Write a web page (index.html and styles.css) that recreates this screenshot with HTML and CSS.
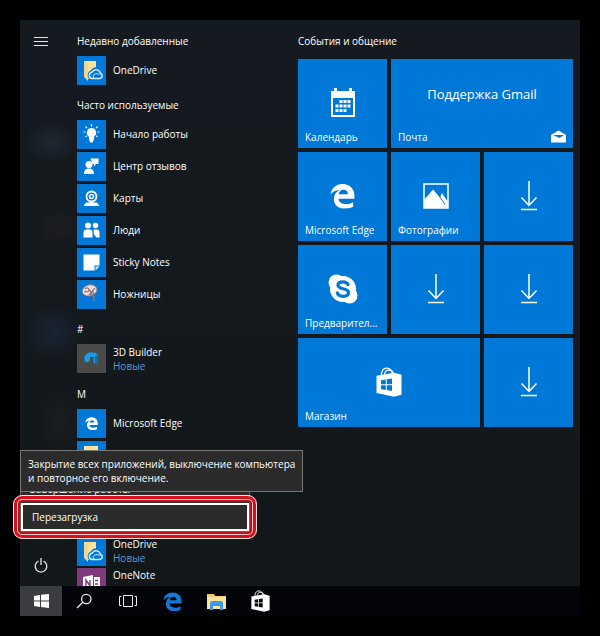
FILE: index.html
```
<!DOCTYPE html>
<html lang="ru">
<head>
<meta charset="utf-8">
<title>Пуск</title>
<link rel="stylesheet" href="styles.css">
</head>
<body>
<svg class="defs" aria-hidden="true">
  <symbol id="edge" viewBox="0 0 24 24"><path d="M0.500 10.600C1.400 4.500 5.500 0.500 12 0.500c7.500 0 11.500 5.200 11.500 11.500v2.600H8.200c0.200 3.600 3.600 5.200 7.200 5.200 2.600 0 4.800-0.700 6.800-1.900v4.500c-2.200 1.200-4.800 1.800-7.700 1.800C8 24.200 3.700 20.500 3.700 15c0-3.900 2-6.900 5.300-8.700C5.500 6.500 2.400 8 0.500 10.600zM8.300 10.300h8.900c0-2.600-1.300-4.400-4.100-4.400-2.700 0-4.400 2-4.800 4.400z"/></symbol>
  <symbol id="onedrive" viewBox="0 0 29 29"><path fill="#ffe29b" d="M7 5h12v18H10l-3-3z"/><path fill="#f3d590" d="M7 5l4 3v17l-4-4z"/><path fill="#0078d7" stroke="#0078d7" stroke-width="4" d="M14.500 22h9a2.500 2.500 0 0 0 .3-5 4.500 4.500 0 0 0-8.500-1 3.200 3.200 0 0 0-.8 6z"/><path fill="#0078d7" stroke="#d5ecff" stroke-width="1.500" d="M14.500 22.500h8.500a2.600 2.600 0 0 0 .5-5 4.500 4.500 0 0 0-8.300-1.500 3.400 3.400 0 0 0-.7 6.500z"/><path fill="none" stroke="#d5ecff" d="M16.500 22a3 3 0 0 1 2-4.200 4 4 0 0 1 4 .7"/></symbol>
  <symbol id="download" viewBox="0 0 18 30"><path fill="none" stroke="#fff" stroke-width="1.500" d="M9 0v24M1.500 16.500L9 24.500l7.500-8M1 28.500h16"/></symbol>
  <symbol id="store" viewBox="0 0 26 30"><path fill="none" stroke="#fff" stroke-width="1.300" d="M5.500 9C5 4 7.500 1 11 1.200c3 .2 5 2.500 5.500 5.500M8.500 8c0-3 2-5 5-4.800 2 .1 3.500 1.500 4 3.500"/><path fill="#fff" d="M0.500 8.800L18 5.800l7.500 2v20L18 29.700 0.500 26z"/><path fill="currentColor" d="M5 13.200l4.800-.7v4.700H5zM10.800 12.300l5.200-.8v5.700h-5.200zM5 18.200h4.800v4.700L5 22.200zM10.800 18.200H16V24l-5.200-.9z"/></symbol>
</svg>
<main class="desktop">
  <section class="start">
    <nav class="rail" aria-label="Пуск">
      <button class="rail-button" aria-label="Меню"><svg width="14" height="10" viewBox="0 0 14 10"><path stroke="#e6e6e6" d="M0 1.500h14M0 5.500h14M0 9.500h14"/></svg></button>
      <button class="rail-button" aria-label="Выключение"><svg width="14" height="16" viewBox="0 0 14 16"><path fill="none" stroke="#e6e6e6" stroke-width="1.300" d="M4.500 4a5.800 5.800 0 1 0 5 0M7 1v7"/></svg></button>
    </nav>
    <div class="apps">
      <h2 class="group-title">Недавно добавленные</h2>
      <a class="app" href="#"><svg class="app-icon" viewBox="0 0 29 29"><use href="#onedrive"/></svg><span>OneDrive</span></a>
      <h2 class="group-title">Часто используемые</h2>
      <a class="app" href="#"><svg class="app-icon" viewBox="0 0 29 29"><path fill="#fff" d="M14.500 8a4.700 4.700 0 0 1 2.700 8.500l-.6 4-1 2h-2.200l-1-2-.6-4A4.700 4.700 0 0 1 14.500 8z"/><path stroke="#e5f2ff" stroke-width="1.200" d="M14.500 4v2.500M8.500 6.500l1.500 1.700M20.500 6.500L19 8.200M6.500 12h2M20.500 12h2M8.500 17l1.300-1.200M20.500 17l-1.300-1.200"/></svg><span>Начало работы</span></a>
      <a class="app" href="#"><svg class="app-icon" viewBox="0 0 29 29"><g fill="#fff"><circle cx="12" cy="12.500" r="3.500"/><path d="M7 22c0-4 2-5.500 5-5.500s5 1.500 5 5.500zM13.500 6.500h8v5.500H19l-2 2.500V12h-1.500z"/></g></svg><span>Центр отзывов</span></a>
      <a class="app" href="#"><svg class="app-icon" viewBox="0 0 29 29"><path fill="#fff" d="M9 18.500h11l2.500 3.500h-16z"/><circle cx="14.500" cy="12.500" r="5" fill="#0078d7" stroke="#fff" stroke-width="1.800"/><circle cx="14.500" cy="12.500" r="2" fill="none" stroke="#fff" stroke-width="1.500"/><path fill="#fff" d="M12 17h5l-2.500 5z"/></svg><span>Карты</span></a>
      <a class="app" href="#"><svg class="app-icon" viewBox="0 0 29 29"><g fill="#fff"><circle cx="11" cy="9.500" r="3"/><circle cx="18.500" cy="9.500" r="2.800"/><path d="M6.500 21.500v-5c0-2 1-3 3-3h3c2 0 3 1 3 3v5zM16.700 18v-4.500H20c1.500 0 2.500 1 2.500 2.500v5.500h-3z"/></g></svg><span>Люди</span></a>
      <a class="app" href="#"><svg class="app-icon" viewBox="0 0 29 29"><path fill="#fff" d="M6.500 6.500h16v11h-5v5h-11z"/><path fill="#d4e9fb" d="M18.500 18.500h4l-4 4z"/></svg><span>Sticky Notes</span></a>
      <a class="app" href="#"><svg class="app-icon" viewBox="0 0 29 29"><ellipse cx="12.500" cy="10.500" rx="7.500" ry="5.500" fill="#e8e3e0" stroke="#8f7777" transform="rotate(-15 12 10)"/><path fill="none" stroke="#b26a60" stroke-width="1.200" d="M8 9c2-2 4-1 4 1s-3 2.500-4.500 1M13 12c2-1 4 0 3.500 2s-3 1.500-3.500 0"/><path stroke="#827a89" stroke-width="1.300" d="M12 9l5 9M18 8l-6 7M17 16v6"/></svg><span>Ножницы</span></a>
      <h2 class="group-title">#</h2>
      <a class="app tall" href="#"><svg class="app-icon gray" viewBox="0 0 29 29"><path fill="#199ce0" d="M7.500 12l4-3.500h6l3.500 2v10l-4.500-1.500v-6h-3.500v3.500l-3 2-2.500-1.500z"/><path fill="#0870ac" d="M18 12.500l3-2v10l-3-1z"/></svg><span>3D Builder<small>Новые</small></span></a>
      <h2 class="group-title">M</h2>
      <a class="app" href="#"><svg class="app-icon" viewBox="0 0 29 29"><use href="#edge" x="8" y="8" width="13" height="13" fill="#fff"/></svg><span>Microsoft Edge</span></a>
      <a class="app last-before-menu" href="#" aria-label="M"><svg class="app-icon" viewBox="0 0 29 29"><path fill="#ffe29b" d="M7 5h14v17H7z"/></svg></a>
      <a class="app" href="#"><svg class="app-icon" viewBox="0 0 29 29"><use href="#onedrive"/></svg><span>OneDrive<small>Новые</small></span></a>
      <a class="app top" href="#"><svg class="app-icon purple" viewBox="0 0 29 29"><path fill="#fff" d="M6 9l10-2v16L6 21zM17 9h6v12h-6z"/><path fill="none" stroke="#80397b" stroke-width="1.400" d="M9 18v-6l4 6v-6M18 12.500h3M18 16h3"/></svg><span>OneNote</span></a>
    </div>
    <div class="tiles-pane">
      <h2 class="group-title">События и общение</h2>
      <div class="tiles">
        <a class="tile" href="#"><svg class="tile-icon" width="24" height="29" viewBox="0 0 24 29"><path fill="#fff" d="M0 3h3V0h3v3h12V0h3v3h3v26H0z"/><path fill="#0078d7" d="M2 10h20v17H2z"/><path stroke="#fff" stroke-width="3" stroke-dasharray="3 1" d="M8.500 13.500h11M4.500 18h15M4.500 22.500h11"/></svg><span class="tile-label">Календарь</span></a>
        <a class="tile wide" href="#"><span class="mail-text">Поддержка Gmail</span><span class="tile-label">Почта</span><svg class="badge" width="15" height="13" viewBox="0 0 15 13"><path fill="#fff" d="M0 5l7.500-4.500L15 5v7.500H0z"/><path fill="#0078d7" d="M2 5h11L8.500 8z"/></svg></a>
        <a class="tile" href="#"><svg class="tile-icon" width="25" height="26" viewBox="0 0 24 24"><use href="#edge" fill="#fff"/></svg><span class="tile-label">Microsoft Edge</span></a>
        <a class="tile" href="#"><svg class="tile-icon" width="26" height="26" viewBox="0 0 26 26"><path fill="none" stroke="#fff" stroke-width="1.500" d="M1 1h24v24H1z"/><path fill="#fff" d="M1 17l9-10.500 7 8 2-4.500 6 9v6H1z"/><path stroke="#0078d7" d="M16 12.500l6 9"/></svg><span class="tile-label">Фотографии</span></a>
        <a class="tile" href="#" aria-label="Загрузка"><svg class="tile-icon" width="18" height="30"><use href="#download"/></svg></a>
        <a class="tile" href="#"><svg class="tile-icon" width="30" height="30" viewBox="0 0 30 30"><g fill="#fff"><circle cx="15" cy="15" r="13"/><circle cx="8.500" cy="8.500" r="8"/><circle cx="21.500" cy="21.500" r="8"/></g><path fill="none" stroke="#0078d7" stroke-width="3.200" stroke-linecap="round" d="M20 10.500c-1-2-3-2.700-5-2.700-3 0-5 1.300-5 3.400 0 4.800 10.500 2.300 10.500 7.300 0 2.500-2.500 3.800-5.500 3.800-2.700 0-4.800-1-5.700-3.300"/></svg><span class="tile-label">Предварител...</span></a>
        <a class="tile" href="#" aria-label="Загрузка"><svg class="tile-icon" width="18" height="30"><use href="#download"/></svg></a>
        <a class="tile" href="#" aria-label="Загрузка"><svg class="tile-icon" width="18" height="30"><use href="#download"/></svg></a>
        <a class="tile wide" href="#"><svg class="tile-icon cut-blue" width="26" height="30"><use href="#store"/></svg><span class="tile-label">Магазин</span></a>
        <a class="tile" href="#" aria-label="Загрузка"><svg class="tile-icon" width="18" height="30"><use href="#download"/></svg></a>
      </div>
    </div>
  </section>
  <nav class="taskbar" aria-label="Панель задач">
    <button class="task active" aria-label="Пуск"><svg width="15" height="14" viewBox="0 0 15 14"><path fill="#fff" d="M0 2l6-1v5.500H0zM7 .8L15 0v6.500H7zM0 7.500h6V13l-6-1zM7 7.500h8V14l-8-1z"/></svg></button>
    <button class="task" aria-label="Поиск"><svg width="16" height="16" viewBox="0 0 16 16"><path fill="none" stroke="#eee" stroke-width="1.300" d="M6.800 9.200L1 15M15 6a4.700 4.700 0 1 1-9.400 0A4.700 4.700 0 0 1 15 6z"/></svg></button>
    <button class="task" aria-label="Представление задач"><svg width="18" height="14" viewBox="0 0 18 14"><path fill="none" stroke="#eee" d="M4.500 1.500h9v11h-9zM2.500 2.500h-2v9h2M15.500 2.500h2v9h-2"/></svg></button>
    <button class="task" aria-label="Microsoft Edge"><svg class="edge-blue" width="19" height="19"><use href="#edge"/></svg></button>
    <button class="task" aria-label="Проводник"><svg width="19" height="17" viewBox="0 0 19 17"><path fill="#f3c976" d="M0 1h7l1 2h11v13H0z"/><path fill="#ffe29b" d="M0 4h19v12H0z"/><path fill="#3c9be8" d="M3 10l1-2h11l1 2v7h-3v-4H6v4H3z"/></svg></button>
    <button class="task" aria-label="Магазин"><svg class="cut-dark" width="19" height="22"><use href="#store"/></svg></button>
  </nav>
  <div class="power-menu" role="menu">
    <button class="menu-item" role="menuitem">Завершение работы</button>
    <button class="menu-item selected" role="menuitem">Перезагрузка</button>
  </div>
  <div class="tooltip" role="tooltip">Закрытие всех приложений, выключение компьютера<br>и повторное его включение.</div>
</main>
</body>
</html>
```
FILE: styles.css
```
* { box-sizing: border-box; }

body {
  margin: 0;
  padding: 20px;
  height: 100vh;
  background: #000;
  color: #fff;
  font: 10px/14px "Open Sans", "Noto Sans", sans-serif;
}

a { color: inherit; text-decoration: none; }

button {
  margin: 0;
  padding: 0;
  border: 0;
  background: none;
  color: inherit;
  font: inherit;
}

.defs { position: absolute; width: 0; height: 0; }

.desktop {
  position: relative;
  display: flex;
  flex-direction: column;
  height: 100%;
}

.start {
  display: flex;
  flex: 1;
  min-height: 0;
  overflow: hidden;
  background:
    radial-gradient(ellipse 28px 22px at 32px 122px, #1f2730, transparent),
    radial-gradient(ellipse 26px 20px at 40px 207px, #1d1e22, transparent),
    radial-gradient(ellipse 30px 28px at 34px 312px, #192433, transparent),
    radial-gradient(ellipse 24px 32px at 40px 402px, #1c1e20, transparent),
    linear-gradient(#151a20, #12171a);
}

.rail {
  display: flex;
  flex-direction: column;
  justify-content: space-between;
  width: 42px;
  flex: none;
}

.rail-button {
  display: flex;
  align-items: center;
  justify-content: center;
  height: 42px;
}

.apps {
  flex: 1;
  padding: 2px 0 0 15px;
}

.group-title {
  margin: 0;
  padding-top: 12px;
  height: 32px;
  font-size: 10px;
  font-weight: 400;
}

.app {
  display: flex;
  align-items: center;
  gap: 7px;
  height: 32px;
}

.tall { height: 33px; }

.app small {
  display: block;
  color: #5a97d0;
  font-size: 10px;
}

.app-icon {
  flex: none;
  width: 29px;
  height: 29px;
  background: #0078d7;
}

.app-icon.gray { background: #4a4a4a; }
.app-icon.purple { background: #80397b; }
.last-before-menu { margin-bottom: 64px; }
.top { align-items: flex-start; padding-top: 1px; }

.tiles-pane {
  flex: none;
  padding: 2px 7px 0 0;
}

.tiles-pane .group-title { height: 37px; }

.tiles {
  display: grid;
  grid-template-columns: repeat(3, 89px);
  grid-auto-rows: 89px;
  gap: 4px;
}

.tile {
  position: relative;
  display: grid;
  place-items: center;
  padding-bottom: 2px;
  background: #0078d7;
}

.wide { grid-column: span 2; }

.tile-label {
  position: absolute;
  left: 7px;
  bottom: 4px;
  white-space: nowrap;
}

.mail-text {
  padding-bottom: 18px;
  font-size: 13px;
  line-height: 20px;
}

.badge {
  position: absolute;
  right: 7px;
  bottom: 5px;
}

.cut-blue { color: #0078d7; }
.cut-dark { color: #02040a; }

.taskbar {
  display: flex;
  flex: none;
  height: 30px;
  background: #02040a;
}

.task {
  display: flex;
  align-items: center;
  justify-content: center;
  width: 44px;
}

.active {
  width: 42px;
  background: #3a3c3f;
}

.edge-blue { fill: #1778d4; }

.power-menu {
  position: absolute;
  left: 0;
  bottom: 84px;
  width: 230px;
  border: 1px solid #666;
  background: #2b2b2b;
}

.menu-item {
  display: block;
  width: 100%;
  height: 28px;
  padding: 0 9px;
  text-align: left;
}

.selected {
  position: relative;
  border: 2px solid #fff;
}

.selected::after {
  content: "";
  position: absolute;
  inset: -10px;
  border: 1px solid #f6dede;
  border-radius: 9px;
  box-shadow:
    inset 0 0 0 3px #d3121c,
    inset 0 0 0 4px #f3cfcf,
    inset 0 0 0 6px #c0101a;
}

.tooltip {
  position: absolute;
  left: 0;
  bottom: 124px;
  padding: 6px 7px;
  border: 1px solid #767676;
  background: #2b2b2b;
  white-space: nowrap;
}
```
